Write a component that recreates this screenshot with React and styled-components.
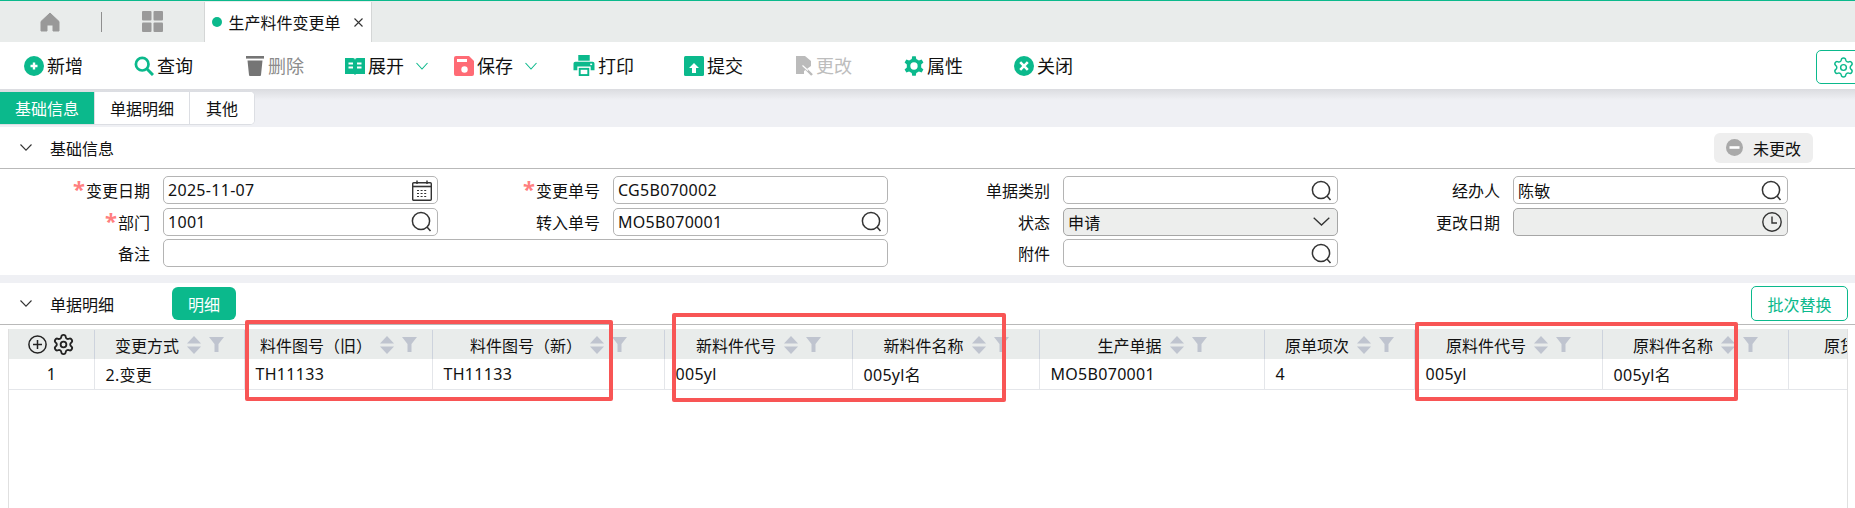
import React from 'react';
import styled, { createGlobalStyle } from 'styled-components';
import { Settings } from 'lucide-react';

const GREEN = '#0bb98c';

const GlobalStyle = createGlobalStyle`
  html, body { margin: 0; padding: 0; background: #fff; }
  body {
    font-family: "Noto Sans", "Noto Sans CJK SC", sans-serif;
    font-size: 16px;
    color: #111;
  }
  * { box-sizing: border-box; }
`;

const Page = styled.div`
  position: relative;
  display: flex;
  flex-direction: column;
  width: 1855px;
  height: 508px;
  overflow: hidden;
`;

/* top tab strip */
const TabStrip = styled.div`
  display: flex;
  align-items: center;
  gap: 40.5px;
  height: 42px;
  padding-left: 40px;
  background: #e9eceb;
  border-top: 1px solid ${GREEN};
  flex: none;
`;

const NavDivider = styled.span`
  width: 1px;
  height: 20px;
  background: #8f8f8f;
`;

const PageTab = styled.div`
  display: flex;
  align-items: center;
  align-self: flex-end;
  width: 168px;
  height: 40px;
  padding-left: 7px;
  background: #fff;
  border-left: 1px solid #d4d6d6;
  border-right: 1px solid #d4d6d6;
  font-size: 16px;
  white-space: nowrap;
`;

const Dot = styled.span`
  width: 10px;
  height: 10px;
  border-radius: 50%;
  background: ${GREEN};
  margin-right: 7px;
  flex: none;
`;

const CloseMark = styled.svg`
  width: 9px;
  height: 9px;
  margin-left: 13px;
  flex: none;
`;

/* toolbar */
const Toolbar = styled.div`
  position: relative;
  display: flex;
  align-items: center;
  height: 47px;
  padding-left: 24px;
  background: #fff;
  flex: none;
`;

const ToolItem = styled.div`
  display: flex;
  align-items: center;
  gap: 3px;
  width: ${p => p.$w}px;
  font-size: 18px;
  line-height: 20px;
  color: ${p => p.$color || '#111'};
  white-space: nowrap;
`;

const DropChevron = styled.svg`
  width: 12px;
  height: 8px;
  margin-left: 9px;
`;

const ConfigButton = styled.div`
  position: absolute;
  top: 8px;
  left: 1816px;
  display: flex;
  align-items: center;
  justify-content: center;
  width: 54px;
  height: 34px;
  border: 1px solid ${GREEN};
  border-radius: 5px;
  background: #fff;
  color: ${GREEN};
`;

/* form tabs band */
const TabsBand = styled.div`
  height: 38px;
  padding-top: 2px;
  background: linear-gradient(#dbdce0, #eff0f4 11px);
  flex: none;
`;

const FormTabs = styled.div`
  display: inline-flex;
  height: 34px;
  background: #fff;
  border: 1px solid #dcdee3;
  border-left: 0;
  border-radius: 0 5px 5px 0;
  overflow: hidden;
`;

const FormTab = styled.div`
  display: flex;
  align-items: center;
  justify-content: center;
  width: ${p => p.$w}px;
  font-size: 16px;
  color: ${p => (p.$active ? '#fff' : '#111')};
  background: ${p => (p.$active ? GREEN : '#fff')};
  border-right: ${p => (p.$last ? '0' : '1px solid #dcdee3')};
`;

/* section heads */
const SectionHead = styled.div`
  display: flex;
  align-items: center;
  height: ${p => p.$h}px;
  padding-left: 20px;
  background: #fff;
  border-bottom: 1px solid #b9b9b9;
  flex: none;
`;

const SectionChevron = styled.svg`
  width: 12px;
  height: 7px;
  margin-right: 18px;
  flex: none;
`;

const SectionTitle = styled.span`
  font-size: 16px;
  white-space: nowrap;
`;

const StateBadge = styled.div`
  display: flex;
  align-items: center;
  gap: 10px;
  width: 99px;
  height: 30px;
  margin-left: auto;
  margin-right: 42px;
  padding-left: 12px;
  background: #eeeeee;
  border-radius: 6px;
  font-size: 16px;
`;

const DetailButton = styled.div`
  display: flex;
  align-items: center;
  justify-content: center;
  width: 64px;
  height: 33px;
  margin-left: 58px;
  background: ${GREEN};
  border-radius: 6px;
  color: #fff;
  font-size: 16px;
`;

const BatchButton = styled.div`
  display: flex;
  align-items: center;
  justify-content: center;
  width: 97px;
  height: 35px;
  margin-left: auto;
  margin-right: 7px;
  border: 1px solid ${GREEN};
  border-radius: 5px;
  color: ${GREEN};
  font-size: 16px;
  background: #fff;
`;

/* form */
const FormGrid = styled.div`
  display: grid;
  grid-template-columns: repeat(4, 450px);
  grid-auto-rows: 28px;
  row-gap: 3.5px;
  height: 106px;
  padding-top: 7px;
  background: #fff;
  flex: none;
`;

const Field = styled.div`
  display: flex;
  align-items: center;
  grid-column: ${p => p.$col} / span ${p => p.$span || 1};
  grid-row: ${p => p.$row};
`;

const Label = styled.label`
  width: 150px;
  margin-right: 13px;
  text-align: right;
  font-size: 16px;
  white-space: nowrap;
  flex: none;
`;

const Star = styled.span`
  margin-right: 1px;
  color: #ff7f7f;
  font-size: 22px;
  line-height: 16px;
  font-weight: 700;
`;

const InputBox = styled.div`
  display: flex;
  align-items: center;
  justify-content: space-between;
  flex: 1;
  height: 28px;
  margin-right: 12px;
  padding: 0 5px 0 4px;
  background: ${p => (p.$disabled ? '#edeeed' : '#fff')};
  border: 1px solid ${p => (p.$disabled ? '#a6a6a6' : '#b4b4b4')};
  border-radius: 5px;
  font-size: 16px;
  letter-spacing: 0.3px;
  white-space: nowrap;
`;

const GapBand = styled.div`
  height: 8px;
  background: #eff0f4;
  flex: none;
`;

/* table */
const TableWrap = styled.div`
  flex: 1;
  margin: 4px 7px 0 8px;
  border-left: 1px solid #e0e0e0;
  border-right: 1px solid #e0e0e0;
  overflow: hidden;
`;

const HeadRow = styled.div`
  display: flex;
  width: max-content;
  height: 30px;
  background: #e9eceb;
`;

const BodyRow = styled.div`
  display: flex;
  width: 1900px;
  height: 31px;
  border-bottom: 1px solid #e4e6ea;
`;

const HeadCell = styled.div`
  display: flex;
  align-items: center;
  justify-content: center;
  gap: ${p => p.$gap || 8}px;
  width: ${p => p.$w}px;
  height: 29px;
  margin-top: 1px;
  border-right: 1px solid #cdd3dd;
  font-size: 16px;
  white-space: nowrap;
  flex: none;
`;

const BodyCell = styled.div`
  display: flex;
  align-items: center;
  justify-content: ${p => (p.$center ? 'center' : 'flex-start')};
  width: ${p => p.$w}px;
  padding-left: ${p => (p.$center ? 0 : 10.5)}px;
  border-right: 1px solid #e4e6ea;
  font-size: 16px;
  letter-spacing: 0.3px;
  white-space: nowrap;
  flex: none;
`;

const Annotation = styled.div`
  position: absolute;
  left: ${p => p.$x}px;
  top: ${p => p.$y}px;
  width: ${p => p.$w}px;
  height: ${p => p.$h}px;
  border: 4px solid #f85555;
  border-radius: 2px;
  pointer-events: none;
`;

const gearPath = (c, ro, ri, teeth) => {
  const pts = [];
  const step = (Math.PI * 2) / teeth;
  for (let i = 0; i < teeth; i++) {
    const a = i * step - Math.PI / 2;
    [[-0.3, ri], [-0.17, ro], [0.17, ro], [0.3, ri]].forEach(([f, r]) => {
      pts.push(`${(c + r * Math.cos(a + f * step)).toFixed(2)} ${(c + r * Math.sin(a + f * step)).toFixed(2)}`);
    });
  }
  return `M${pts.join('L')}Z`;
};

const HomeIcon = () => (
  <svg width="20" height="20" viewBox="0 0 20 20">
    <path d="M10 1 L19 9.5 V19 H13 V13 H7 V19 H1 V9.5 Z" fill="#999" stroke="#999" strokeLinejoin="round" />
  </svg>
);

const GridIcon = () => (
  <svg width="21" height="21" viewBox="0 0 21 21" fill="#9a9a9a">
    <rect x="0" y="0" width="9.5" height="9.5" rx="1" />
    <rect x="11.5" y="0" width="9.5" height="9.5" rx="1" />
    <rect x="0" y="11.5" width="9.5" height="9.5" rx="1" />
    <rect x="11.5" y="11.5" width="9.5" height="9.5" rx="1" />
  </svg>
);

const PlusIcon = () => (
  <svg width="20" height="20" viewBox="0 0 20 20">
    <circle cx="10" cy="10" r="10" fill={GREEN} />
    <path d="M10 6.5 V13.5 M6.5 10 H13.5" stroke="#fff" strokeWidth="2.4" />
  </svg>
);

const QueryIcon = () => (
  <svg width="20" height="20" viewBox="0 0 20 20" fill="none" stroke={GREEN}>
    <circle cx="8.2" cy="8.2" r="6.3" strokeWidth="2.7" />
    <path d="M12.8 12.8 L19 19" strokeWidth="3" />
  </svg>
);

const TrashIcon = () => (
  <svg width="20" height="20" viewBox="0 0 20 20" fill="#757575">
    <rect x="1" y="0" width="18" height="2.6" />
    <path d="M2.5 4.5 H17.5 L16 19 Q16 20 15 20 H5 Q4 20 4 19 Z" />
  </svg>
);

const BookIcon = () => (
  <svg width="20" height="20" viewBox="0 0 20 20">
    <path d="M0 2 H8 Q10 2 10 4 Q10 2 12 2 H20 V18 H11 L10 19 L9 18 H0 Z" fill={GREEN} />
    <path d="M3.5 7.5 H8 M12 7.5 H16.5 M3.5 11.5 H8 M12 11.5 H16.5" stroke="#fff" strokeWidth="2" />
  </svg>
);

const SaveIcon = () => (
  <svg width="20" height="20" viewBox="0 0 20 20">
    <path d="M2 0 H15 L20 5 V18 Q20 20 18 20 H2 Q0 20 0 18 V2 Q0 0 2 0 Z" fill="#ff6b75" />
    <rect x="3" y="3" width="10" height="3" fill="#fff" />
    <circle cx="10.5" cy="13.5" r="3.2" fill="#fff" />
  </svg>
);

const PrintIcon = () => (
  <svg width="22" height="21" viewBox="0 0 22 22" fill={GREEN}>
    <path d="M5 0 H17 V6 H5 Z" />
    <path d="M2 7 H20 Q22 7 22 9 V16 H18 V12 H4 V16 H0 V9 Q0 7 2 7 Z" />
    <path d="M5.5 13.5 H16.5 V22 H5.5 Z" />
    <rect x="17.5" y="9" width="2" height="1.6" fill="#fff" />
    <rect x="7.5" y="15.5" width="7" height="4.5" fill="#fff" />
  </svg>
);

const SubmitIcon = () => (
  <svg width="20" height="20" viewBox="0 0 20 20">
    <rect width="20" height="20" rx="1.5" fill={GREEN} />
    <path d="M10 7 L15 12 H12 V17 H8 V12 H5 Z" fill="#fff" />
  </svg>
);

const AmendIcon = () => (
  <svg width="18" height="20" viewBox="0 0 18 20">
    <path d="M1 0 H10 L16 5 V10 L9 15 V18 H1 Z" fill="#bbb" />
    <path d="M9 11 L17 19" stroke="#bbb" strokeWidth="2.4" />
    <path d="M7.5 9.5 L13 14.5" stroke="#fff" strokeWidth="1.2" />
  </svg>
);

const CogIcon = () => (
  <svg width="20" height="20" viewBox="0 0 24 24">
    <path d={gearPath(12, 12, 8.8, 6)} fill={GREEN} />
    <circle cx="12" cy="12" r="4.4" fill="#fff" />
  </svg>
);

const ShutIcon = () => (
  <svg width="20" height="20" viewBox="0 0 20 20">
    <circle cx="10" cy="10" r="10" fill={GREEN} />
    <path d="M6.2 6.2 L13.8 13.8 M13.8 6.2 L6.2 13.8" stroke="#fff" strokeWidth="2.6" />
  </svg>
);

const Chevron = ({ color = GREEN }) => (
  <DropChevron viewBox="0 0 12 8" fill="none" stroke={color} strokeWidth="1.1">
    <path d="M0.5 1 L6 7 L11.5 1" />
  </DropChevron>
);

const FoldChevron = () => (
  <SectionChevron viewBox="0 0 12 7" fill="none" stroke="#333" strokeWidth="1.1">
    <path d="M0.5 0.5 L6 6.2 L11.5 0.5" />
  </SectionChevron>
);

const SearchGlyph = () => (
  <svg width="21" height="21" viewBox="0 0 21 21" fill="none" stroke="#333" strokeWidth="1.5">
    <circle cx="10" cy="10" r="8.6" />
    <path d="M16 16 L19.5 20" />
  </svg>
);

const CalendarGlyph = () => (
  <svg width="20" height="21" viewBox="0 0 20 21" fill="none" stroke="#333">
    <rect x="0.7" y="2.7" width="18.6" height="17.6" rx="1" strokeWidth="1.4" />
    <path d="M1 6.5 H19" strokeWidth="1.6" />
    <path d="M5 0.5 V4 M15 0.5 V4" strokeWidth="1.4" />
    <path d="M5 10.5 H15 M5 13.5 H15 M5 16.5 H15" strokeWidth="1.2" strokeDasharray="2 1.6" />
  </svg>
);

const ClockGlyph = () => (
  <svg width="20" height="20" viewBox="0 0 20 20" fill="none" stroke="#333" strokeWidth="1.4">
    <circle cx="10" cy="10" r="9.2" />
    <path d="M10 4.5 V11 H15" />
  </svg>
);

const SelectGlyph = () => (
  <svg width="17" height="9" viewBox="0 0 17 9" fill="none" stroke="#333" strokeWidth="1.3" style={{ marginRight: 2 }}>
    <path d="M0.7 0.7 L8.5 8 L16.3 0.7" />
  </svg>
);

const MinusBadge = () => (
  <svg width="17" height="17" viewBox="0 0 17 17">
    <circle cx="8.5" cy="8.5" r="8.5" fill="#a9a9a9" />
    <rect x="3.5" y="7.2" width="10" height="2.6" fill="#fff" />
  </svg>
);

const SortGlyph = () => (
  <svg width="14" height="18" viewBox="0 0 14 18" fill="#bfc4cf" style={{ flex: 'none' }}>
    <path d="M7 0 L14 7.5 H0 Z" />
    <path d="M7 18 L14 10.5 H0 Z" />
  </svg>
);

const FilterGlyph = () => (
  <svg width="15" height="15" viewBox="0 0 15 15" fill="#bfc4cf" style={{ flex: 'none' }}>
    <path d="M0 0 H15 L9.5 7 V15 H5.5 V7 Z" />
  </svg>
);

const AddRowGlyph = () => (
  <svg width="19" height="19" viewBox="0 0 19 19" fill="none" stroke="#222" strokeWidth="1.5">
    <circle cx="9.5" cy="9.5" r="8.6" />
    <path d="M9.5 5 V14 M5 9.5 H14" />
  </svg>
);

const tools = [
  { label: '新增', w: 110, icon: <PlusIcon /> },
  { label: '查询', w: 111, icon: <QueryIcon /> },
  { label: '删除', w: 100, icon: <TrashIcon />, color: '#8b8b8b' },
  { label: '展开', w: 109, icon: <BookIcon />, drop: true },
  { label: '保存', w: 119, icon: <SaveIcon />, drop: true },
  { label: '打印', w: 111, icon: <PrintIcon /> },
  { label: '提交', w: 111, icon: <SubmitIcon /> },
  { label: '更改', w: 109, icon: <AmendIcon />, color: '#bdbdbd' },
  { label: '属性', w: 110, icon: <CogIcon /> },
  { label: '关闭', w: 70, icon: <ShutIcon /> },
];

const columns = [
  { title: '变更方式', w: 150, value: '2.变更' },
  { title: '料件图号（旧）', w: 188, value: 'TH11133' },
  { title: '料件图号（新）', w: 232, value: 'TH11133' },
  { title: '新料件代号', w: 188, value: '005yl' },
  { title: '新料件名称', w: 187, value: '005yl名' },
  { title: '生产单据', w: 225, value: 'MO5B070001' },
  { title: '原单项次', w: 150, value: '4' },
  { title: '原料件代号', w: 188, value: '005yl' },
  { title: '原料件名称', w: 186, value: '005yl名' },
  { title: '原货位号', w: 180, value: '' },
];

export default function App() {
  return (
    <Page>
      <GlobalStyle />
      <TabStrip>
        <HomeIcon />
        <NavDivider />
        <GridIcon />
        <PageTab>
          <Dot />
          生产料件变更单
          <CloseMark viewBox="0 0 9 9" fill="none" stroke="#333" strokeWidth="1.1">
            <path d="M0.5 0.5 L8.5 8.5 M8.5 0.5 L0.5 8.5" />
          </CloseMark>
        </PageTab>
      </TabStrip>

      <Toolbar>
        {tools.map(t => (
          <ToolItem key={t.label} $w={t.w} $color={t.color}>
            {t.icon}
            {t.label}
            {t.drop && <Chevron />}
          </ToolItem>
        ))}
        <ConfigButton>
          <Settings size={23} strokeWidth={1.5} />
        </ConfigButton>
      </Toolbar>

      <TabsBand>
        <FormTabs>
          <FormTab $w={95} $active>基础信息</FormTab>
          <FormTab $w={95}>单据明细</FormTab>
          <FormTab $w={64} $last>其他</FormTab>
        </FormTabs>
      </TabsBand>

      <SectionHead $h={42}>
        <FoldChevron />
        <SectionTitle>基础信息</SectionTitle>
        <StateBadge>
          <MinusBadge />
          未更改
        </StateBadge>
      </SectionHead>

      <FormGrid>
        <Field $col={1} $row={1}>
          <Label><Star>*</Star>变更日期</Label>
          <InputBox>2025-11-07<CalendarGlyph /></InputBox>
        </Field>
        <Field $col={2} $row={1}>
          <Label><Star>*</Star>变更单号</Label>
          <InputBox>CG5B070002</InputBox>
        </Field>
        <Field $col={3} $row={1}>
          <Label>单据类别</Label>
          <InputBox><span /><SearchGlyph /></InputBox>
        </Field>
        <Field $col={4} $row={1}>
          <Label>经办人</Label>
          <InputBox>陈敏<SearchGlyph /></InputBox>
        </Field>
        <Field $col={1} $row={2}>
          <Label><Star>*</Star>部门</Label>
          <InputBox>1001<SearchGlyph /></InputBox>
        </Field>
        <Field $col={2} $row={2}>
          <Label>转入单号</Label>
          <InputBox>MO5B070001<SearchGlyph /></InputBox>
        </Field>
        <Field $col={3} $row={2}>
          <Label>状态</Label>
          <InputBox $disabled>申请<SelectGlyph /></InputBox>
        </Field>
        <Field $col={4} $row={2}>
          <Label>更改日期</Label>
          <InputBox $disabled><span /><ClockGlyph /></InputBox>
        </Field>
        <Field $col={1} $span={2} $row={3}>
          <Label>备注</Label>
          <InputBox />
        </Field>
        <Field $col={3} $row={3}>
          <Label>附件</Label>
          <InputBox><span /><SearchGlyph /></InputBox>
        </Field>
      </FormGrid>

      <GapBand />

      <SectionHead $h={42}>
        <FoldChevron />
        <SectionTitle>单据明细</SectionTitle>
        <DetailButton>明细</DetailButton>
        <BatchButton>批次替换</BatchButton>
      </SectionHead>

      <TableWrap>
        <HeadRow>
          <HeadCell $w={86} $gap={5}>
            <AddRowGlyph />
            <Settings size={23} strokeWidth={1.9} color="#222" />
          </HeadCell>
          {columns.map(c => (
            <HeadCell key={c.title} $w={c.w}>
              <span>{c.title}</span>
              <SortGlyph />
              <FilterGlyph />
            </HeadCell>
          ))}
        </HeadRow>
        <BodyRow>
          <BodyCell $w={86} $center>1</BodyCell>
          {columns.map(c => (
            <BodyCell key={c.title} $w={c.w}>{c.value}</BodyCell>
          ))}
        </BodyRow>
      </TableWrap>

      <Annotation $x={245} $y={320} $w={368} $h={81} />
      <Annotation $x={672} $y={313} $w={334} $h={89} />
      <Annotation $x={1415} $y={322} $w={323} $h={79} />
    </Page>
  );
}
